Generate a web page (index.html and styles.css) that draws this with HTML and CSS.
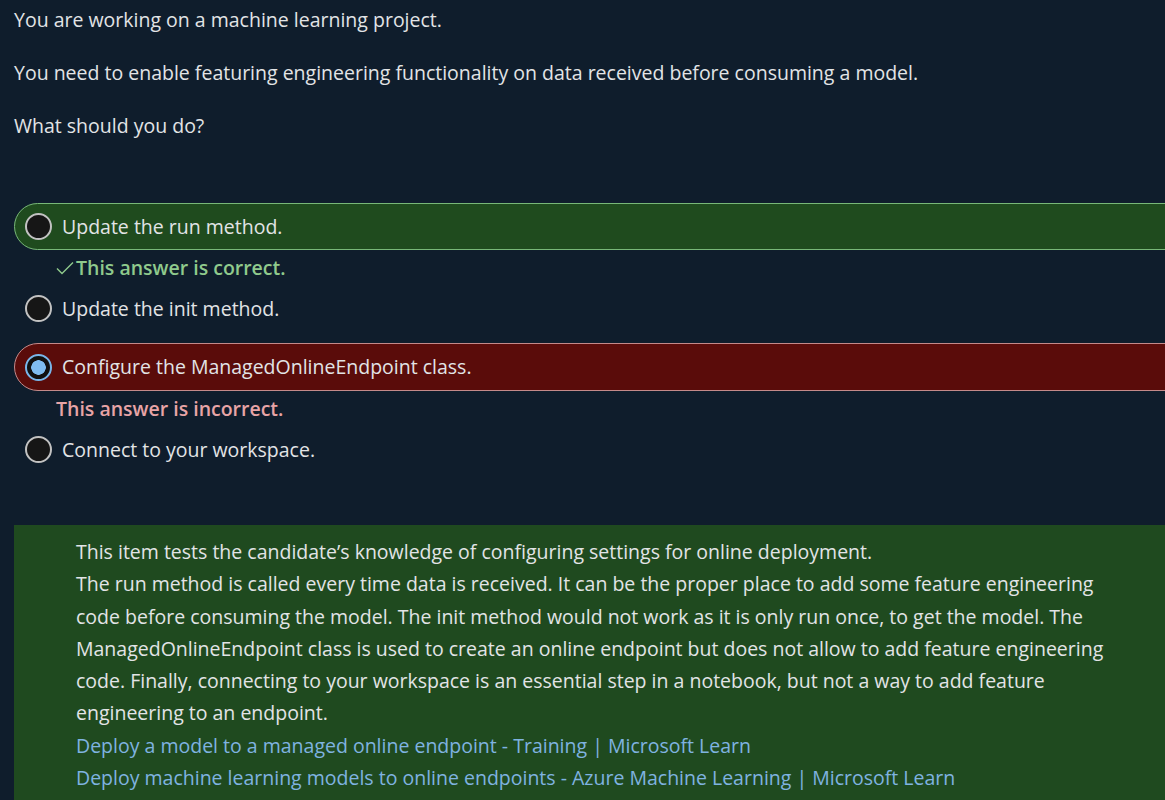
FILE: index.html
```html
<!DOCTYPE html>
<html lang="en">
<head>
<meta charset="utf-8">
<title>Question</title>
<link rel="stylesheet" href="styles.css">
</head>
<body>
<main class="page">
  <section class="question">
    <p>You are working on a machine learning project.</p>
    <p>You need to enable featuring engineering functionality on data received before consuming a model.</p>
    <p>What should you do?</p>
  </section>

  <section class="options">
    <div class="option option-correct">
      <span class="radio"></span>
      <span class="label">Update the run method.</span>
    </div>
    <div class="feedback feedback-correct">
      <svg class="check" width="18" height="14" viewBox="0 0 18 14"><path d="M1 7.5 L6 12.5 L17 1.5" fill="none" stroke="currentColor" stroke-width="1.4"/></svg>
      <span>This answer is correct.</span>
    </div>
    <div class="option option-plain spaced">
      <span class="radio"></span>
      <span class="label">Update the init method.</span>
    </div>
    <div class="option option-wrong">
      <span class="radio radio-selected"></span>
      <span class="label">Configure the ManagedOnlineEndpoint class.</span>
    </div>
    <div class="feedback feedback-wrong">
      <span>This answer is incorrect.</span>
    </div>
    <div class="option option-plain">
      <span class="radio"></span>
      <span class="label">Connect to your workspace.</span>
    </div>
  </section>

  <section class="explanation">
    <p>This item tests the candidate’s knowledge of configuring settings for online deployment.</p>
    <p>The run method is called every time data is received. It can be the proper place to add some feature engineering code before consuming the model. The init method would not work as it is only run once, to get the model. The ManagedOnlineEndpoint class is used to create an online endpoint but does not allow to add feature engineering code. Finally, connecting to your workspace is an essential step in a notebook, but not a way to add feature engineering to an endpoint.</p>
    <p><a href="#">Deploy a model to a managed online endpoint - Training | Microsoft Learn</a></p>
    <p><a href="#">Deploy machine learning models to online endpoints - Azure Machine Learning | Microsoft Learn</a></p>
  </section>
</main>
</body>
</html>
```
FILE: styles.css
```css
html, body {
  margin: 0;
  padding: 0;
  overflow: hidden;
  background: #0f1d2c;
}
body {
  font-family: "Open Sans", "Noto Sans", sans-serif;
  font-size: 19.5px;
  color: #e2e4e6;
}
.page {
  width: 1220px;
  padding: 4px 0 0 14px;
}
.question p {
  margin: 0 0 21px;
  line-height: 32px;
}
.question {
  margin-bottom: 61px;
}
.options {
  display: flex;
  flex-direction: column;
}
.option {
  display: flex;
  align-items: center;
  gap: 10px;
  height: 47px;
  box-sizing: border-box;
  padding-left: 10px;
  border: 1px solid transparent;
  border-radius: 24px 0 0 24px;
}
.option-correct {
  background: #1f4b1e;
  border-color: #78b878;
}
.option-wrong {
  background: #5a0c0a;
  border-color: #c48a8a;
  height: 48px;
}
.spaced {
  margin-bottom: 11px;
}
.radio {
  width: 27px;
  height: 27px;
  box-sizing: border-box;
  border-radius: 50%;
  border: 2px solid #c2c2c2;
  background: #161616;
  flex: none;
}
.radio-selected {
  border: 2px solid #79b6ea;
  background: radial-gradient(circle, #7fbcf0 0 7px, #111 7.5px);
}
.label {
  line-height: 32px;
}
.feedback {
  display: flex;
  align-items: center;
  height: 35px;
  padding-left: 42px;
  font-weight: 600;
}
.feedback-correct {
  color: #8fca8c;
}
.check {
  margin-right: 2px;
}
.feedback-wrong {
  color: #e8a4a6;
}
.explanation {
  margin-top: 52px;
  background: #1f4a1f;
  padding: 11px 114px 40px 62px;
}
.explanation p {
  margin: 0;
  line-height: 32.3px;
}
.explanation a {
  color: #7fb3e0;
  text-decoration: none;
}
```
